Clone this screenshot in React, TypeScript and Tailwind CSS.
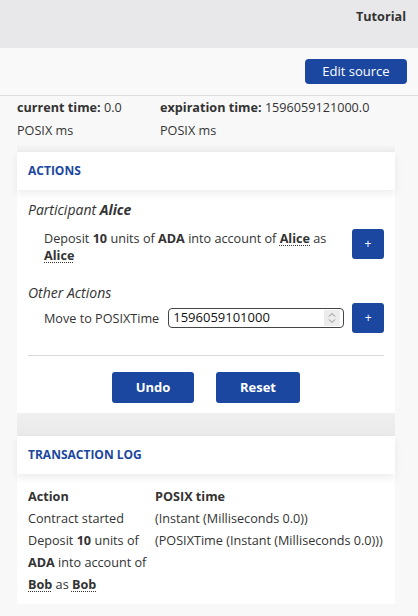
import React from 'react'

const blue = 'bg-[#1b47a0]'

function Plus() {
  return (
    <button className={`w-[32px] h-[30px] ${blue} rounded-[3px] text-white text-[12px] leading-none flex items-center justify-center shrink-0`}>
      +
    </button>
  )
}

function Party({ children }: { children: React.ReactNode }) {
  return <b className="font-bold underline decoration-dotted decoration-1 underline-offset-2">{children}</b>
}

export default function App() {
  return (
    <div className="w-[418px] h-[616px] overflow-hidden bg-[#f8f8f8] text-[#333] text-[12.65px]" style={{ fontFamily: '"Open Sans", sans-serif' }}>
      <div className="h-[48px] bg-[#e8e8ea] flex justify-end pt-[7px] pr-[12px]">
        <span className="font-bold text-[12.65px] text-[#333]">Tutorial</span>
      </div>
      <div className="h-[48px] bg-[#f9f9f9] border-b border-[#dcdcdc] flex justify-end pt-[11px] pr-[11px]">
        <button className={`h-[25px] w-[102px] ${blue} rounded-[4px] text-white text-[13px]`}>Edit source</button>
      </div>

      <div className="px-[17px]">
        <div className="flex pt-[0px] leading-[23px] text-[#333]">
          <div className="w-[143px]">
            <div><b>current time:</b> 0.0</div>
            <div>POSIX ms</div>
          </div>
          <div>
            <div><b>expiration time:</b> 1596059121000.0</div>
            <div>POSIX ms</div>
          </div>
        </div>

        <div className="w-[378px] mt-[2px] h-[8px] bg-gradient-to-b from-[#f8f8f8] to-[#ececec]" />
        <div className="w-[378px] bg-white">
          <div className="h-[38px] px-[11px] flex items-center shadow-[0_4px_8px_rgba(0,0,0,0.07)] relative">
            <span className="text-[#1b47a0] font-bold text-[12px]">ACTIONS</span>
          </div>
          <div className="px-[11px] pt-[10px] pb-[10px]">
            <div className="italic text-[14px] leading-[20px]">Participant <b>Alice</b></div>
            <div className="flex items-start mt-[8px] pl-[16px]">
              <div className="flex-1 leading-[17px] pt-[2px] pr-[10px]">
                Deposit <b>10</b> units of <b>ADA</b> into account of <Party>Alice</Party> as <Party>Alice</Party>
              </div>
              <div className="pt-[1px]"><Plus /></div>
            </div>
            <div className="italic text-[14px] leading-[20px] mt-[19px]">Other Actions</div>
            <div className="flex items-center pl-[16px]">
              <span className="mr-[9px] whitespace-nowrap shrink-0">Move to POSIXTime</span>
              <div className="w-[176px] h-[20px] border border-[#444] rounded-[4px] flex items-center pl-[4px] pr-[3px] mr-[8px] shrink-0">
                <span className="flex-1 text-[13px] text-[#111]">1596059101000</span>
                <svg width="16" height="16" viewBox="0 0 16 16" className="bg-[#ececec]">
                  <path d="M5 6.5 L8 3.5 L11 6.5" stroke="#888" fill="none" strokeWidth="1" />
                  <path d="M5 9.5 L8 12.5 L11 9.5" stroke="#888" fill="none" strokeWidth="1" />
                </svg>
              </div>
              <Plus />
            </div>
            <div className="border-t border-[#d8d8d8] mt-[22px]" />
            <div className="flex justify-center gap-[22px] mt-[16px]">
              <button className={`w-[82px] h-[31px] ${blue} rounded-[3px] text-white font-bold text-[13px]`}>Undo</button>
              <button className={`w-[84px] h-[31px] ${blue} rounded-[3px] text-white font-bold text-[13px]`}>Reset</button>
            </div>
          </div>
        </div>
        <div className="w-[378px] h-[23px] bg-gradient-to-b from-[#f0f0f0] to-[#e9e9e9]" />

        <div className="w-[378px] bg-white">
          <div className="h-[38px] px-[11px] flex items-center shadow-[0_4px_8px_rgba(0,0,0,0.07)] relative">
            <span className="text-[#1b47a0] font-bold text-[12px]">TRANSACTION LOG</span>
          </div>
          <div className="px-[11px] pt-[11px] pb-[9px] leading-[22px] grid grid-cols-[127px_1fr]">
            <b>Action</b>
            <b>POSIX time</b>
            <div>Contract started</div>
            <div>(Instant (Milliseconds 0.0))</div>
            <div>Deposit <b>10</b> units of <b>ADA</b> into account of <Party>Bob</Party> as <Party>Bob</Party></div>
            <div className="whitespace-nowrap">(POSIXTime (Instant (Milliseconds 0.0)))</div>
          </div>
        </div>
      </div>
    </div>
  )
}
